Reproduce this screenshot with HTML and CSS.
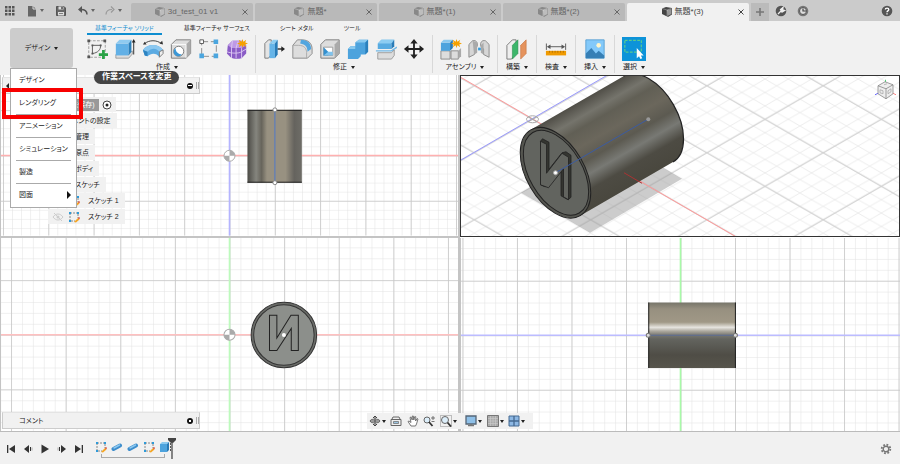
FILE: index.html
```html
<!doctype html>
<html lang="ja">
<head>
<meta charset="utf-8">
<meta name="viewport" content="width=device-width, initial-scale=1">
<title>無題*(3)</title>
<link rel="stylesheet" href="styles.css">
</head>

<body>
<!-- shared icons -->
<svg class="sprite" aria-hidden="true">
	<symbol id="cube" viewBox="0 0 12 12">
		<path d="M1 2.500L5 1l6 1v6.500L7 11 1 8z" fill="currentColor"/>
		<path d="M6 4l4.500-1v5L6.500 10z" fill="#fff" opacity=".45"/>
		<path d="M1 2.500L6 4l5-2M6 4v7" fill="none" stroke="#fff" stroke-width=".5" opacity=".6"/>
	</symbol>
	<symbol id="sketch" viewBox="0 0 12 12">
		<path d="M2 2h8v5M2 2v8h5" fill="none" stroke="#888" stroke-dasharray="2 1"/>
		<path d="M1 1h2v2H1zM9 1h2v2H9zM1 9h2v2H1z" fill="#2d9ad8"/>
		<path d="M6 11l4-4 1.500 1.500L8 11.500z" fill="#f5a623"/>
		<path d="M10 7l1-1 1 1-1 1.500z" fill="#d9432f"/>
	</symbol>
	<symbol id="close" viewBox="0 0 8 8"><path d="M1.500 1.500l5 5M6.500 1.500l-5 5" stroke="currentColor" fill="none"/></symbol>
	<symbol id="origin" viewBox="0 0 14 14">
		<circle cx="7" cy="7" r="5.500" fill="#fff" stroke="#aaa"/>
		<path d="M7 7V1.500A5.500 5.500 0 0 1 12.500 7zM7 7v5.500A5.500 5.500 0 0 1 1.500 7z" fill="#aaa"/>
	</symbol>
</svg>

<header class="topbar">
	<div class="quick">
		<button class="ico" aria-label="データパネル"><svg width="10" height="10" viewBox="0 0 10 10"><path d="M0 0h2.500v2.500H0zM3.500 0H6v2.500H3.500zM7 0h2.500v2.500H7zM0 3.500h2.500V6H0zM3.500 3.500H6V6H3.500zM7 3.500h2.500V6H7zM0 7h2.500v2.500H0zM3.500 7H6v2.500H3.500zM7 7h2.500v2.500H7z" fill="#555"/></svg></button>
		<button class="ico drop file" aria-label="ファイル"><svg width="10" height="12" viewBox="0 0 10 12"><path d="M1 1h5l3 3v7.500H1z" fill="#666"/><path d="M6 1v3h3" fill="none" stroke="#ddd"/></svg></button>
		<button class="ico save" aria-label="保存"><svg width="10" height="10" viewBox="0 0 10 10"><path d="M.5.5H8L9.500 2v7.500h-9z" fill="#666" stroke="#555"/><path d="M2.500.5h5v3h-5zM2 6h6v3.500H2z" fill="#ddd"/><path d="M5.500 1h1v2h-1zM3 7.500h4" stroke="#666" fill="#666" stroke-width=".8"/></svg></button>
		<button class="ico drop undo" aria-label="元に戻す"><svg width="10" height="9" viewBox="0 0 10 9"><path d="M9 8.500C9 5 6.500 3.500 3 3.500" fill="none" stroke="#555" stroke-width="1.500"/><path d="M0 3.500L4 0v7z" fill="#555"/></svg></button>
		<button class="ico drop redo" aria-label="やり直し"><svg width="10" height="9" viewBox="0 0 10 9"><path d="M1 8.500C1 5 3.500 3.500 7 3.500" fill="none" stroke="#999" stroke-width="1.200"/><path d="M6 .5l3 3-3 3" fill="none" stroke="#999" stroke-width="1.200"/></svg></button>
	</div>
	<nav class="docs">
		<div class="doc"><a href="#"><svg class="cube"><use href="#cube"/></svg>3d_test_01 v1</a><button aria-label="閉じる"><svg class="x"><use href="#close"/></svg></button></div>
		<div class="doc"><a href="#"><svg class="cube"><use href="#cube"/></svg>無題*</a><button aria-label="閉じる"><svg class="x"><use href="#close"/></svg></button></div>
		<div class="doc"><a href="#"><svg class="cube"><use href="#cube"/></svg>無題*(1)</a><button aria-label="閉じる"><svg class="x"><use href="#close"/></svg></button></div>
		<div class="doc"><a href="#"><svg class="cube"><use href="#cube"/></svg>無題*(2)</a><button aria-label="閉じる"><svg class="x"><use href="#close"/></svg></button></div>
		<div class="doc active"><a href="#"><svg class="cube"><use href="#cube"/></svg>無題*(3)</a><button aria-label="閉じる"><svg class="x"><use href="#close"/></svg></button></div>
	</nav>
	<div class="status">
		<button class="plus" aria-label="新規"><svg width="10" height="10" viewBox="0 0 10 10"><path d="M5 1v8M1 5h8" stroke="#777" stroke-width="1.600"/></svg></button>
		<button class="ico" aria-label="拡張機能"><svg width="12" height="12" viewBox="0 0 12 12"><circle cx="6" cy="6" r="5.300" fill="#555"/><path d="M3 9l3-3M5.500 4.500L8 2.500 7.500 5l2 .5L7 7z" stroke="#eee" stroke-width="1.300" fill="#eee"/></svg></button>
		<button class="ico" aria-label="ジョブ"><svg width="12" height="12" viewBox="0 0 12 12"><circle cx="6" cy="6" r="5.300" fill="#777"/><circle cx="6" cy="6" r="3.500" fill="#ddd" stroke="#555"/><path d="M6 3.500V6h3" fill="none" stroke="#444" stroke-width="1.200"/></svg></button>
		<button class="ico help" aria-label="ヘルプ"><svg width="12" height="12" viewBox="0 0 12 12"><circle cx="6" cy="6" r="5.300" fill="#555"/><path d="M4.300 4.600C4.300 2.500 7.800 2.500 7.800 4.600 7.800 6 6 5.800 6 7.200M6 8.300v1.300" fill="none" stroke="#fff" stroke-width="1.300"/></svg></button>
	</div>
</header>

<div class="ribbon">
	<div class="workspace">
		<button class="space drop">デザイン</button>
		<ul class="menu">
			<li><a href="#">デザイン</a></li>
			<li class="picked"><a href="#">レンダリング</a></li>
			<li><a href="#">アニメーション</a></li>
			<li><a href="#">シミュレーション</a></li>
			<li><a href="#">製造</a></li>
			<li class="more"><a href="#">図面</a></li>
		</ul>
		<div class="tip">作業スペースを変更</div>
	</div>
	<div class="tools">
		<nav class="kinds">
			<a href="#" class="active">基準フィーチャ ソリッド</a>
			<a href="#">基準フィーチャ サーフェス</a>
			<a href="#">シート メタル</a>
			<a href="#">ツール</a>
		</nav>
		<div class="groups">
			<section class="group">
				<div class="icons">
					<button aria-label="スケッチを作成"><svg viewBox="0 0 24 24"><path d="M3 3h18v18H3z" fill="none" stroke="#999" stroke-dasharray="3 1.500"/><path d="M7 8h9c0 5-3 8-9 9z" fill="none" stroke="#555"/><path d="M1.500 1.500h3v3h-3zM19 1.500h3v3h-3zM1.500 19h3v3h-3zM6 7h2v2H6zM15 7h2v2h-2zM6 16h2v2H6z" fill="#555"/><path d="M19 13v10M14 18h10" stroke="#29a245" stroke-width="3"/></svg></button>
					<button aria-label="押し出し"><svg viewBox="0 0 24 24"><path d="M2 20.500V18h14l4-4v3.500L16 22H2z" fill="#ddd" stroke="#888" stroke-width=".8"/><path d="M2 6h14v13H2z" fill="#62b0e6"/><path d="M2 6l4-4h13l-3 4z" fill="#8fcaf0"/><path d="M16 6l3-4v13l-3 4z" fill="#2c7fba"/><path d="M21.500 18V4" stroke="#222"/><path d="M19.500 5l2-4 2 4z" fill="#222"/></svg></button>
					<button aria-label="回転"><svg viewBox="0 0 24 24"><path d="M1 13C6 6 18 6 23 13l-4 8c-3-5-9-5-13-1l-3-1z" fill="#5aaae2"/><path d="M1 13C6 6 18 6 23 13l-4 2C15 10 10 11 6 15z" fill="#8cc8f0"/><path d="M19 15l4-2v4l-4 4z" fill="#eee" stroke="#777"/><path d="M1 13l5 2v5l-3-1z" fill="#2d83c1"/><path d="M3 6C8 2 16 2 21 6" fill="none" stroke="#333"/><path d="M1 7l2-3 2 3zM19 6l4 1-1-4z" fill="#333"/></svg></button>
					<button aria-label="穴"><svg viewBox="0 0 24 24"><path d="M1.500 7l5-5h16v15l-5 5h-16z" fill="#ddd" stroke="#777"/><path d="M17.500 7l5-5v15l-5 5z" fill="#aaa"/><path d="M2 7h15.500v14.500" fill="none" stroke="#fff"/><circle cx="9.500" cy="14.500" r="5.500" fill="#fff" stroke="#777"/><path d="M6 11a5 5 0 1 0 7 7c-4 0-7-3-7-7z" fill="#3b97d6"/></svg></button>
					<button aria-label="パターン"><svg viewBox="0 0 24 24"><path d="M4 4h16v16H4z" fill="none" stroke="#888" stroke-dasharray="7 3"/><path d="M2 2h4v4H2z" fill="#fff" stroke="#555"/><path d="M17 1.500h5v5h-5zM1.500 17h5v5h-5zM17 17h5v5h-5z" fill="#4ba6df"/></svg></button>
					<button aria-label="フォーム"><svg viewBox="0 0 24 24"><path d="M2 8l5-5h10l5 5v9l-5 5c-4 1-9 1-12-1l-4-4z" fill="#8a5cc6"/><path d="M2 8l5-5h10l5 5-5 3H6z" fill="#bf9ae6"/><path d="M1 15c5 2 13 2 16 0l5-3M7 3L6 11v11M13 4l-2 7v11M17 11v11" fill="none" stroke="#ddc9f3"/><path d="M18 1l1 3 3-2-1 3 3 1-3 1 1 3-3-2-1 3-1-3-3 2 1-3-3-1 3-1-1-3 3 2z" fill="#f5a100"/></svg></button>
				</div>
				<button class="drop label">作成</button>
			</section>
			<section class="group">
				<div class="icons">
					<button aria-label="プレス プル"><svg viewBox="0 0 24 24"><path d="M2 6l4-4h3v16l-3 4H2z" fill="#e4e4e4" stroke="#777"/><path d="M7 6h6v16H7z" fill="#65b4e8"/><path d="M7 6l4-4h5l-3 4z" fill="#8dcdf2"/><path d="M13 6l3-4v16l-3 4z" fill="#277bb8"/><path d="M16 12h5" stroke="#222" stroke-width="1.500"/><path d="M20 9l4 3-4 3z" fill="#222"/></svg></button>
					<button aria-label="フィレット"><svg viewBox="0 0 24 24"><path d="M2 8l5-6h5c7 0 11 4 11 10v5l-5 5H2z" fill="#ddd" stroke="#888"/><path d="M11 2c7 0 11 4 11 10l-4 3c0-5-2-8-8-9z" fill="#53a6df"/><path d="M2 8h6c7 0 9 4 9 8v6" fill="none" stroke="#aaa"/></svg></button>
					<button aria-label="シェル"><svg viewBox="0 0 24 24"><path d="M2 7l5-5h15v15l-5 5H2z" fill="#ddd" stroke="#777"/><path d="M17 7l5-5v15l-5 5z" fill="#aaa"/><path d="M5 10h10v9H5z" fill="#fff" stroke="#999"/><path d="M5 10l5 5v4H5z" fill="#3490cf"/><path d="M10 15h5v4H5z" fill="#7fc3ee"/></svg></button>
					<button aria-label="結合"><svg viewBox="0 0 24 24"><path d="M1 12l3-3h5V5l4-3h10v13l-3 3h-5v2l-3 3H1z" fill="#4da3dd"/><path d="M9 5l4-3h10l-3 3zM1 12l3-3h5v3z" fill="#89c9ef"/><path d="M20 5l3-3v13l-3 3z" fill="#2b80bd"/></svg></button>
					<button aria-label="分割"><svg viewBox="0 0 24 24"><path d="M3 6l4-4h14l-3 4v6H3z" fill="#58abe1"/><path d="M3 6l4-4h14l-3 4z" fill="#8dcdf2"/><path d="M18 6l3-4v7l-3 3z" fill="#277bb8"/><path d="M1 14h17l6-4" fill="none" stroke="#71b8e6" stroke-width="1.500"/><path d="M3 16h15l3-3v6l-3 4H3z" fill="#ddd" stroke="#888" stroke-width=".8"/></svg></button>
					<button aria-label="移動"><svg viewBox="0 0 24 24"><path d="M12 4v16M4 12h16" stroke="#222" stroke-width="2"/><path d="M8 6l4-5 4 5zM8 18l4 5 4-5zM6 8l-5 4 5 4zM18 8l5 4-5 4z" fill="#222"/></svg></button>
				</div>
				<button class="drop label">修正</button>
			</section>
			<section class="group">
				<div class="icons">
					<button aria-label="新規コンポーネント"><svg viewBox="0 0 24 24"><path d="M1 14h10v9H1zM12 14h8v9h-8z" fill="#ddd" stroke="#888"/><path d="M20 14l3-3v9l-3 3z" fill="#aaa"/><path d="M1 5h10v9H1z" fill="#4da3dd"/><path d="M1 5l3-3h10l-3 3z" fill="#8bc9ef"/><path d="M11 5l3-3v9l-3 3z" fill="#2879b5"/><path d="M18 1l1 3 3-2-1 3 3 1-3 1 1 3-3-2-1 3-1-3-3 2 1-3-3-1 3-1-1-3 3 2z" fill="#f5a100"/></svg></button>
					<button aria-label="ジョイント"><svg viewBox="0 0 24 24"><path d="M1 7l4-4c4-1 6 2 5 6l-3 3v6l-6 3z" fill="#d6d6d6" stroke="#888"/><path d="M5 3l1 9 1 6 3-2V5z" fill="#aaa"/><path d="M23 7l-4-4c-4-1-6 2-5 6l3 3v6l6 3z" fill="#d6d6d6" stroke="#888"/><path d="M14 8l3-3v13l-3-2z" fill="#aaa"/><path d="M11 12h3" stroke="#389ddb" stroke-width="3"/></svg></button>
				</div>
				<button class="drop label">アセンブリ</button>
			</section>
			<section class="group single">
				<div class="icons"><button aria-label="オフセット平面"><svg viewBox="0 0 24 24"><path d="M1 8l6-6h4v14l-5 7H1z" fill="#eee" stroke="#777"/><path d="M7 8l6-6v15l-6 6z" fill="#3cb66b" stroke="#278a4c" stroke-width=".6"/><path d="M16 8l6-6v15l-6 6z" fill="#e5935d" stroke="#c36d35" stroke-width=".6"/></svg></button></div>
				<button class="drop label">構築</button>
			</section>
			<section class="group single">
				<div class="icons"><button aria-label="計測"><svg viewBox="0 0 24 24"><path d="M1.500 6v7M22.500 6v7M4 9.500h16" stroke="#555"/><path d="M2 9.500L6 7v5zM22 9.500L18 7v5z" fill="#555"/><path d="M1 14h22v5H1z" fill="#f09a00"/><path d="M5 14v2M8 14v2M11 14v2M14 14v2M17 14v2M20 14v2" stroke="#965d00" stroke-width=".7"/></svg></button></div>
				<button class="drop label">検査</button>
			</section>
			<section class="group single">
				<div class="icons"><button aria-label="画像"><svg viewBox="0 0 24 24"><path d="M2 2h20v20H2z" fill="#83c9fa" stroke="#5ba1d2"/><circle cx="16" cy="8" r="2.500" fill="#fff5cb"/><path d="M2 17l6-6 5 6 3-3 6 5v3H2z" fill="#367fb5"/></svg></button></div>
				<button class="drop label">挿入</button>
			</section>
			<section class="group single">
				<div class="icons"><button class="on" aria-label="選択"><svg viewBox="0 0 24 24"><path d="M2 2.500h18v13H2z" fill="none" stroke="#59cc8d" stroke-width="1.300" stroke-dasharray="3 1.500"/><path d="M15 11v11l2.500-2 1.500 3 2-1-1.500-3h3z" fill="#fff"/></svg></button></div>
				<button class="drop label">選択</button>
			</section>
		</div>
	</div>
</div>

<main class="canvas">
	<div class="view">
		<svg class="scene" viewBox="0 75 458 161" preserveAspectRatio="xMidYMid slice">
			<defs>
				<pattern id="fine" x="229" y="155.700" width="9.080" height="9.080" patternUnits="userSpaceOnUse"><path d="M0 0v9.080M0 0h9.080" stroke="#e2e2e2"/></pattern>
				<pattern id="wide" x="229" y="155.700" width="45.400" height="45.400" patternUnits="userSpaceOnUse"><path d="M0 0v45.400M0 0h45.400" stroke="#c8c8c8" stroke-width="1.600"/></pattern>
				<linearGradient id="side"><stop offset="0" stop-color="#4c4b46"/><stop offset=".16" stop-color="#85857e"/><stop offset=".26" stop-color="#67645b"/><stop offset=".36" stop-color="#989181"/><stop offset=".7" stop-color="#989181"/><stop offset=".86" stop-color="#65635e"/><stop offset="1" stop-color="#6e6d67"/></linearGradient>
			</defs>
			<path d="M0 75h458v161H0z" fill="url(#fine)"/>
			<path d="M0 75h458v161H0z" fill="url(#wide)"/>
			<path d="M0 155.700h458" stroke="#ffb0b0" stroke-width="1.600"/>
			<path d="M229 75v161" stroke="#b4b4ff" stroke-width="1.600"/>
			<use href="#origin" x="222" y="149" width="14" height="14"/>
			<path d="M247 110h54.500v73H247z" fill="url(#side)"/>
			<path d="M247 110.500h54.500M247 182.500h54.500" stroke="#222"/>
			<path d="M274.500 111v72" stroke="#4f78c8"/>
			<g fill="#fff" stroke="#888"><circle cx="274.500" cy="110" r="2"/><circle cx="274.500" cy="183" r="2"/></g>
		</svg>
	</div>

	<div class="view current">
		<svg class="scene" viewBox="461 76 438 160" preserveAspectRatio="xMidYMid slice">
			<defs>
				<pattern id="isofine" x="706.900" y="86" width="23.260" height="13.400" patternUnits="userSpaceOnUse"><path d="M0 0l23.260 13.400M23.260 0L0 13.400" stroke="#e8e8e8" stroke-width=".8"/></pattern>
				<pattern id="isowide" x="706.900" y="86" width="116.300" height="67" patternUnits="userSpaceOnUse"><path d="M0 0l116.300 67M116.300 0L0 67" stroke="#ccc"/></pattern>
				<linearGradient id="round" gradientUnits="userSpaceOnUse" x1="530.700" y1="130" x2="580.200" y2="216"><stop offset="0" stop-color="#504e47"/><stop offset=".14" stop-color="#75746c"/><stop offset=".24" stop-color="#615f55"/><stop offset=".4" stop-color="#6b675c"/><stop offset=".55" stop-color="#5c5a51"/><stop offset=".68" stop-color="#787974"/><stop offset=".82" stop-color="#4d4b43"/><stop offset="1" stop-color="#49473e"/></linearGradient>
			</defs>
			<path d="M461 75h439v162H461z" fill="url(#isofine)"/>
			<path d="M461 75h439v162H461z" fill="url(#isowide)"/>
			<path d="M521 193l69 40 92-54-68-40z" fill="#999" opacity=".5"/>
			<path d="M458 76l278 161" stroke="#f99"/>
			<path d="M458 162L608 75" stroke="#99f"/>
			<g fill="none" stroke="#aaa"><ellipse cx="532.500" cy="119.500" rx="6" ry="3.500"/><path d="M528 117l9 5M528 122l9-5"/></g>
			<path d="M530.700 130.100L623.500 76.400A49.500 29 60 0 1 673 162.200L580.200 215.900z" fill="url(#round)"/>
			<path d="M623.500 76.400A49.500 29 60 0 1 673 162.200" fill="none" stroke="#222" stroke-width="1.200"/>
			<ellipse cx="555.500" cy="173" rx="49.500" ry="29" transform="rotate(60 555.500 173)" fill="#555650" stroke="#222"/>
			<ellipse cx="556" cy="173" rx="46.500" ry="26.500" transform="rotate(60 556 173)" fill="#62645f" stroke="#222"/>
			<path d="M540.500 141.500l2-2.500 6.500 3.500v27l13-16.500 4-1 5 3.500v42l-3 2.500-7-4v-28l-13 18-3 1-4.500-2z" fill="#343530" stroke="#222" stroke-width=".8"/>
			<path d="M540.500 141.500l6 3v29l15.500-20 6.500 4V200l-5-3v-28l-15 19-8-3z" fill="#62645f" stroke="#222" stroke-width=".8"/>
			<path d="M555.500 173L648 119.500" stroke="#3b5ba2"/>
			<path d="M624 173l18 10.500" stroke="#a33"/>
			<circle cx="555.500" cy="173" r="2" fill="#fff" stroke="#aaa"/>
			<circle cx="648.300" cy="119.500" r="2" fill="#999"/>
			<g stroke-width=".8"><path d="M885.500 80v3" stroke="#2c5"/><path d="M875 95l4-2" stroke="#44f"/><path d="M892 93l4 2" stroke="#f66"/><path d="M878 86l7-4 8 3v9l-7 5-8-5z" fill="#eee" stroke="#888"/><path d="M878 86l8 3 7-4M886 89v10" fill="none" stroke="#888"/><path d="M880 90l3 1v3l-3-1zM888 91l3-2v3l-3 2zM884 85l3-1" fill="none" stroke="#aaa"/></g>
		</svg>
	</div>

	<div class="view">
		<svg class="scene" viewBox="0 239 458 192" preserveAspectRatio="xMidYMid slice">
			<defs>
				<pattern id="fine2" x="229" y="335" width="10.840" height="10.840" patternUnits="userSpaceOnUse"><path d="M0 0v10.840M0 0h10.840" stroke="#e2e2e2"/></pattern>
				<pattern id="wide2" x="229" y="335" width="54.200" height="54.200" patternUnits="userSpaceOnUse"><path d="M0 0v54.200M0 0h54.200" stroke="#c8c8c8" stroke-width="1.600"/></pattern>
			</defs>
			<path d="M0 238h458v194H0z" fill="url(#fine2)"/>
			<path d="M0 238h458v194H0z" fill="url(#wide2)"/>
			<path d="M0 335h458" stroke="#ffc0c0" stroke-width="1.600"/>
			<path d="M229 238v194" stroke="#bdfabd" stroke-width="1.600"/>
			<use href="#origin" x="222" y="328" width="14" height="14"/>
			<circle cx="283" cy="335.300" r="32.500" fill="#6b6d69" stroke="#333"/>
			<circle cx="283" cy="335.300" r="30" fill="#8c8f8b" stroke="#333"/>
			<path d="M268.700 315.700h7.300v22.600l14-22.600h7.300v35h-7v-22L276 350.700h-7.300z" fill="#8c8f8b" stroke="#222"/>
			<circle cx="283" cy="335.300" r="2" fill="#fff"/>
		</svg>
	</div>

	<div class="view">
		<svg class="scene" viewBox="461 239 438 192" preserveAspectRatio="xMidYMid slice">
			<defs>
				<pattern id="fine3" x="680" y="335.500" width="10.820" height="10.820" patternUnits="userSpaceOnUse"><path d="M0 0v10.820M0 0h10.820" stroke="#e2e2e2"/></pattern>
				<pattern id="wide3" x="680" y="335.500" width="54.100" height="54.100" patternUnits="userSpaceOnUse"><path d="M0 0v54.100M0 0h54.100" stroke="#c8c8c8" stroke-width="1.600"/></pattern>
				<linearGradient id="lying" x2="0" y2="1"><stop offset="0" stop-color="#77756a"/><stop offset=".1" stop-color="#979080"/><stop offset=".3" stop-color="#a09886"/><stop offset=".38" stop-color="#e6e4df"/><stop offset=".44" stop-color="#aaa69c"/><stop offset=".5" stop-color="#77766f"/><stop offset=".56" stop-color="#63645f"/><stop offset=".8" stop-color="#4f4d46"/><stop offset="1" stop-color="#57554c"/></linearGradient>
			</defs>
			<path d="M461 238h439v194H461z" fill="url(#fine3)"/>
			<path d="M461 238h439v194H461z" fill="url(#wide3)"/>
			<path d="M461 335.500h439" stroke="#bcbcff" stroke-width="1.600"/>
			<path d="M680 238v194" stroke="#a8faa8" stroke-width="1.600"/>
			<path d="M648 303h87v65h-87z" fill="url(#lying)"/>
			<path d="M648.500 303v65M734.500 303v65" stroke="#222"/>
			<path d="M648 335.500h87" stroke="#5d6c96"/>
			<g fill="#ddd" stroke="#777"><circle cx="648" cy="335.500" r="2"/><circle cx="734.500" cy="335.500" r="2"/></g>
		</svg>
	</div>

	<aside class="browser">
		<div class="panel"><i class="back"></i><button class="dot minus" aria-label="折りたたむ"></button><i class="grip"></i></div>
		<ul class="tree">
			<li class="root"><span>(未保存)</span><svg width="10" height="10" viewBox="0 0 10 10"><circle cx="5" cy="5" r="4" fill="#fff" stroke="#444"/><circle cx="5" cy="5" r="1.500" fill="#222"/></svg></li>
			<li class="wide"><span>ドキュメントの設定</span></li>
			<li><span>管理</span></li>
			<li><span>原点</span></li>
			<li><span>ボディ</span></li>
			<li><span>スケッチ</span></li>
			<li class="leaf"><svg class="eye" viewBox="0 0 12 12"><path d="M1 6c3-4 7-4 10 0-3 4-7 4-10 0zM2 2l8 8" fill="none" stroke="#ccc"/><circle cx="6" cy="6" r="1.500" fill="#ccc"/></svg><svg class="sk"><use href="#sketch"/></svg><span>スケッチ 1</span></li>
			<li class="leaf"><svg class="eye" viewBox="0 0 12 12"><path d="M1 6c3-4 7-4 10 0-3 4-7 4-10 0zM2 2l8 8" fill="none" stroke="#ccc"/><circle cx="6" cy="6" r="1.500" fill="#ccc"/></svg><svg class="sk"><use href="#sketch"/></svg><span>スケッチ 2</span></li>
		</ul>
	</aside>

	<div class="panel comment"><span>コメント</span><button class="dot add" aria-label="コメントを追加"></button><i class="grip"></i></div>

	<div class="navbar">
		<button class="drop" aria-label="オービット"><svg width="12" height="12" viewBox="0 0 12 12"><path d="M6 1v10M1 6h10M4 3l2-2 2 2M4 9l2 2 2-2" fill="none" stroke="#444"/><ellipse cx="6" cy="6" rx="5" ry="2" fill="none" stroke="#666"/></svg></button>
		<button aria-label="ビュー正面"><svg width="12" height="12" viewBox="0 0 12 12"><path d="M1 4.500h10v6H1zM2 4l1-2h6l1 2" fill="#eee" stroke="#666"/><path d="M3.500 6.500h5v2h-5z" fill="#9cc5e2" stroke="#666" stroke-width=".7"/></svg></button>
		<button aria-label="画面移動"><svg width="12" height="12" viewBox="0 0 12 12"><path d="M4 11L1 6.500l1-.5 2 1.500L3 2.500l1-.5 1.200 3L5.300 1h1l.5 4 1-3.500 1 .3L8.600 6l1.600-2.500.8.500-1.500 5L8.500 11z" fill="#fff" stroke="#555" stroke-width=".8"/></svg></button>
		<button aria-label="ズーム"><svg width="12" height="12" viewBox="0 0 12 12"><circle cx="4" cy="5" r="3" fill="#dceefa" stroke="#666"/><path d="M6 7l3.500 4" stroke="#333" stroke-width="1.800"/><path d="M8 3h4M10 1v4M8.500 6.500h3" stroke="#555" stroke-width=".8"/></svg></button>
		<button class="drop" aria-label="窓ズーム"><svg width="12" height="12" viewBox="0 0 12 12"><path d="M.5.5h11v11H.5z" fill="none" stroke="#888" stroke-dasharray="1 1"/><circle cx="5" cy="5" r="3.500" fill="#dceefa" stroke="#666"/><path d="M7.500 7.500l3.500 4" stroke="#333" stroke-width="1.800"/></svg></button>
		<button class="drop shift" aria-label="表示設定"><svg width="12" height="12" viewBox="0 0 12 12"><path d="M1 1h10v8H1z" fill="#8fc0e8" stroke="#567" stroke-width="1.300"/><path d="M3 10.500h6M6 9v2" stroke="#777" stroke-width="1.500"/></svg></button>
		<button class="drop" aria-label="グリッド"><svg width="12" height="12" viewBox="0 0 12 12"><path d="M.5.5h11v11H.5z" fill="#aaa" stroke="#777"/><path d="M3.500 1v10M6 1v10M8.500 1v10M1 3.500h10M1 6h10M1 8.500h10" stroke="#ccc" stroke-width=".6"/></svg></button>
		<button class="drop" aria-label="ビューポート"><svg width="12" height="12" viewBox="0 0 12 12"><path d="M1 1h10v10H1z" fill="#8db8e4" stroke="#446890"/><path d="M6 1v10M1 6h10" stroke="#446890" stroke-width="1.300"/></svg></button>
	</div>
</main>

<footer class="timeline">
	<div class="play">
		<button aria-label="先頭へ"><svg width="10" height="10" viewBox="0 0 10 10"><path d="M1 1h1.300v8H1zM9 1v8L3 5z" fill="#333"/></svg></button>
		<button aria-label="前へ"><svg width="10" height="10" viewBox="0 0 10 10"><path d="M6 1v8L1 5zM7 3h1v4H7z" fill="#333"/><path d="M9 3.500v3" stroke="#999" stroke-width=".8"/></svg></button>
		<button aria-label="再生"><svg width="10" height="10" viewBox="0 0 10 10"><path d="M1.500.5v9L9 5z" fill="#333"/></svg></button>
		<button aria-label="次へ"><svg width="10" height="10" viewBox="0 0 10 10"><path d="M4 1v8l5-4zM2 3h1v4H2z" fill="#333"/><path d="M1 3.500v3" stroke="#999" stroke-width=".8"/></svg></button>
		<button aria-label="最後へ"><svg width="10" height="10" viewBox="0 0 10 10"><path d="M1 1v8l6-4zM7.700 1H9v8H7.700z" fill="#333"/></svg></button>
	</div>
	<div class="steps">
		<button aria-label="スケッチ1"><svg class="sk"><use href="#sketch"/></svg></button>
		<button aria-label="押し出し1"><svg class="sk" viewBox="0 0 12 12"><path d="M2.500 8L9 4.500" stroke="#3d8dcc" stroke-width="4" stroke-linecap="round"/><path d="M3 7l5.500-3" stroke="#8cc8f0" stroke-width="1.500" stroke-linecap="round"/></svg></button>
		<button aria-label="押し出し2"><svg class="sk" viewBox="0 0 12 12"><path d="M2.500 8L9 4.500" stroke="#3d8dcc" stroke-width="4" stroke-linecap="round"/><path d="M3 7l5.500-3" stroke="#8cc8f0" stroke-width="1.500" stroke-linecap="round"/></svg></button>
		<button aria-label="スケッチ2"><svg class="sk"><use href="#sketch"/></svg></button>
		<button aria-label="押し出し3"><svg class="sk" viewBox="0 0 12 12"><path d="M1 3h7v8H1z" fill="#4da3dd"/><path d="M1 3l2-2h7L8 3z" fill="#8bc9ef"/><path d="M8 3l2-2v8l-2 2z" fill="#2879b5"/><path d="M11.500 2v8" stroke="#555" stroke-dasharray="2 1"/></svg></button>
	</div>
	<svg class="marker" width="10" height="22" viewBox="0 0 10 22"><path d="M1 1h8v2L6 6H4L1 3z" fill="#444"/><path d="M5 5v17" stroke="#555" stroke-width="1.400"/></svg>
	<button class="gear" aria-label="設定"><svg width="12" height="12" viewBox="0 0 12 12"><circle cx="6" cy="6" r="4.300" fill="none" stroke="#777" stroke-width="1.800" stroke-dasharray="1.800 1.570"/><circle cx="6" cy="6" r="2.800" fill="none" stroke="#777" stroke-width="1.400"/></svg></button>
</footer>
</body>
</html>
```

FILE: styles.css
```css
*{ margin:0; padding:0; box-sizing:border-box; list-style:none;}
body{ min-height:100vh; display:flex; flex-direction:column; background:#f1f1f1; color:#222; font:7px/12px "Liberation Sans","Noto Sans CJK JP",sans-serif; font-feature-settings:"palt";}
button{ border:0; background:none; font:inherit; font-feature-settings:inherit; color:inherit; display:flex; align-items:center; justify-content:center;}
a{ color:inherit; text-decoration:none;}
svg{ display:block; flex:none;}
.sprite{ position:absolute; width:0; height:0;}

/* small triangle after anything that opens a menu */
.drop::after{ content:""; border:2px solid transparent; border-top:3px solid #222; border-bottom:0; margin-left:4px;}

/* top bar */
.topbar{ display:flex; height:21px; background:#cbcbcb;}
.quick{ width:131px; flex:none; display:flex; align-items:center; padding-left:5px;}
.quick .drop::after{ border-top-color:#666; margin-left:3px;}
.file{ margin-left:12px;}
.save{ margin-left:12px;}
.undo{ margin-left:12px;}
.redo{ margin-left:10px;}
.docs{ flex:1; display:flex; gap:2px; padding-top:3px; font-size:8px;}
.doc{ flex:1; display:flex; align-items:center; background:#b9b9b9; color:#666; border-radius:2px 2px 0 0; padding-right:4px;}
.doc a{ flex:1; display:flex; align-items:center; justify-content:center; gap:2px; height:18px;}
.doc.active{ background:#f1f1f1; color:#444;}
.cube{ width:12px; height:12px; color:#888;}
.active .cube{ color:#444;}
.x{ width:8px; height:8px;}
.status{ width:151px; flex:none; display:flex; align-items:center; gap:10px; padding:0 7px 0 2px;}
.plus{ width:18px; height:18px; background:#bbb; align-self:flex-end; margin-right:-4px;}
.help{ margin-left:auto;}

/* ribbon */
.ribbon{ display:flex; height:54px; padding-left:10px;}
.workspace{ width:75px; flex:none; position:relative; padding-top:7px; z-index:5;}
.space{ width:63px; height:40px; background:#ccc; border-radius:3px;}
.menu{ position:absolute; left:0; top:47px; width:67px; background:#fff; border:1px solid #aaa; padding:0 5px;}
.menu li{ position:relative; height:23px; border-bottom:1px solid #aaa; padding:5px 3px;}
.menu li:last-child{ border-bottom:0;}
.menu a{ display:block; white-space:nowrap;}
.picked::before{ content:""; position:absolute; left:-14px; right:-12px; top:-4px; height:23px; border:4px solid #f80000;}
.more::after{ content:""; position:absolute; right:0; top:7px; border:4px solid transparent; border-left-color:#111; border-right:0;}
.tip{ position:absolute; left:84px; top:50px; height:13px; padding:0 8px; border-radius:7px; background:#444; color:#fff; font-size:8px; font-weight:bold; white-space:nowrap;}

.tools{ flex:1; min-width:0;}
.kinds{ display:flex; gap:14px; height:14px; padding-left:2px; font-size:6px;}
.kinds a{ padding:1px 8px 0; height:14px; white-space:nowrap;}
.kinds .active{ color:#0d8dd0; border-bottom:2px solid #0d8dd0;}
.groups{ display:flex;}
.group{ padding:2px 6px 0; position:relative;}
.group:first-child{ padding-left:0;}
.group+.group{ border-left:1px solid #d8d8d8;}
.single{ padding:2px 7px 0;}
.icons{ display:flex; gap:4px;}
.icons button{ width:24px; height:24px;}
.icons svg{ width:22px; height:22px;}
.icons .on{ background:#0d93d9;}
.label{ width:100%; height:12px; white-space:nowrap;}

/* four viewports */
.canvas{ position:relative; flex:1; display:grid; grid-template-columns:460fr 440fr; grid-template-rows:163fr 194fr; background:#fff; border-bottom:1px solid #bbb;}
.view{ position:relative; overflow:hidden; border-right:2px solid #c4c4c4; border-bottom:2px solid #c4c4c4; border-left:1px solid #c4c4c4;}
.view:nth-child(n+3){ border-bottom:0;}
.view:nth-child(4){ border-right:0;}
.view.current{ border:1px solid #333; margin-bottom:1px;}
.scene{ position:absolute; width:100%; height:100%;}

.panel{ width:198px; height:17px; display:flex; align-items:center; background:#f1f1f1; border:1px solid #ccc; border-top-color:#e4e4e4;}
.grip{ width:3px; height:7px; border:1px solid #aaa; border-width:0 1px; margin-left:3px;}
.back{ border:3px solid transparent; border-right-color:#222; border-left:0; margin-left:3px;}
.dot{ width:6px; height:6px; border-radius:50%; background:#111; margin-left:auto; position:relative;}
.minus::before{ content:""; width:4px; height:1px; background:#fff;}
.add::before{ content:""; width:2px; height:2px; background:#fff;}
.browser{ position:absolute; left:2px; top:2px;}
.tree{ display:flex; flex-direction:column; align-items:flex-start; gap:1px; padding-top:3px;}
.tree li{ height:15px; display:flex; align-items:center; background:#f1f1f1; padding:0 6px 0 4px; margin-left:69px; white-space:nowrap;}
.tree .root{ margin-left:63px; padding:0 4px 0 0; gap:3px;}
.root span{ background:#999; color:#fff; padding:0 4px;}
.tree .wide{ margin-left:48px;}
.tree .leaf{ margin-left:46px; gap:4px;}
.leaf span{ padding-left:4px;}
.eye,.sk{ width:12px; height:12px;}
.comment{ position:absolute; left:2px; bottom:2px; padding-left:16px;}
.navbar{ position:absolute; left:50%; bottom:2px; transform:translateX(-50%); width:166px; height:16px; display:flex; align-items:center; justify-content:space-between; padding:0 8px 0 2px; background:#f1f1f1;}
.navbar .drop::after{ margin-left:1px;}
.shift{ margin-left:4px;}

/* timeline */
.timeline{ display:flex; height:33px; padding:5px 8px 0 6px; border-bottom:1px solid #fff;}
.play{ display:flex; gap:7px; height:23px; align-items:center;}
.steps{ display:flex; gap:4px; height:20px; padding-bottom:1px; margin-left:11px; position:relative;}
.steps::after{ content:""; position:absolute; left:6px; right:6px; bottom:-1px; height:3px; border:1px solid #aaa; border-top:0;}
.marker{ margin-left:-4px;}
.gear{ margin-left:auto; height:23px;}
```
